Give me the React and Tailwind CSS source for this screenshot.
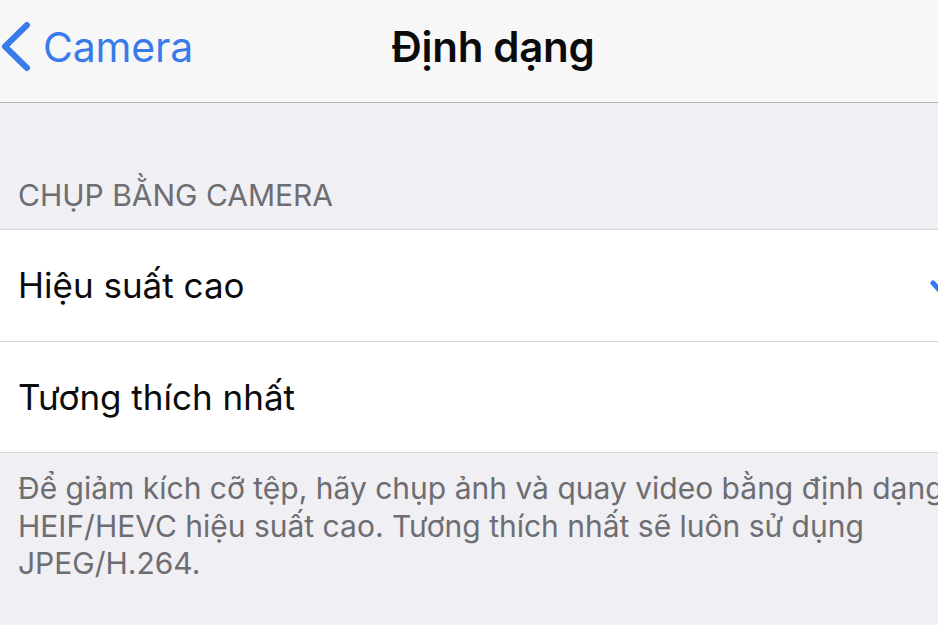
import React from 'react';

const rows = [
  { label: 'Hiệu suất cao', checked: true },
  { label: 'Tương thích nhất', checked: false },
];

const Checkmark = () => (
  <svg width="32" height="26" viewBox="0 0 32 26" fill="none" className="shrink-0">
    <path d="M3 10 L11.5 19.5 L29 2" stroke="#3478f6" strokeWidth="5" strokeLinecap="round" strokeLinejoin="round" />
  </svg>
);

export default function App() {
  return (
    <div className="w-[938px] h-[625px] overflow-hidden bg-[#efeff4] font-['Inter',sans-serif]">
      <div className="w-[986px]">
        {/* Nav bar */}
        <div className="relative flex h-[103px] items-center border-b border-[#b4b4b8] bg-[#f7f7f8] pb-[8px]">
          <button className="flex items-center gap-[12px] pl-[1px] text-[#3a7bea]">
            <svg width="30" height="50" viewBox="0 0 30 50" fill="none">
              <path d="M26 3 L4 24.5 L26 46" stroke="#3a7bea" strokeWidth="6" strokeLinecap="round" strokeLinejoin="round" />
            </svg>
            <span className="text-[41px] leading-none tracking-[-0.2px]">Camera</span>
          </button>
          <h1 className="absolute inset-x-0 top-[26px] text-center text-[42px] font-semibold leading-none tracking-[-0.3px] text-[#0b0b0c] pointer-events-none">
            Định dạng
          </h1>
        </div>

        {/* Section header */}
        <div className="flex h-[126px] items-end px-[18px] pb-[19px]">
          <span className="text-[30px] leading-none text-[#6d6d72]">CHỤP BẰNG CAMERA</span>
        </div>

        {/* Options */}
        <div className="border-y border-[#d6d6da] bg-white">
          {rows.map((row, i) => (
            <div
              key={row.label}
              className={`flex h-[111px] items-center justify-between pl-[18px] pr-[24px] ${i > 0 ? 'border-t border-[#d6d6da]' : ''}`}
            >
              <span className="text-[35px] leading-none text-[#0b0b0c]">{row.label}</span>
              {row.checked && <Checkmark />}
            </div>
          ))}
        </div>

        {/* Footer */}
        <p className="whitespace-nowrap px-[18px] pt-[17px] text-[30px] leading-[37.5px] text-[#6d6d72]">
          Để giảm kích cỡ tệp, hãy chụp ảnh và quay video bằng định dạng
          <br />
          HEIF/HEVC hiệu suất cao. Tương thích nhất sẽ luôn sử dụng
          <br />
          JPEG/H.264.
        </p>
      </div>
    </div>
  );
}
